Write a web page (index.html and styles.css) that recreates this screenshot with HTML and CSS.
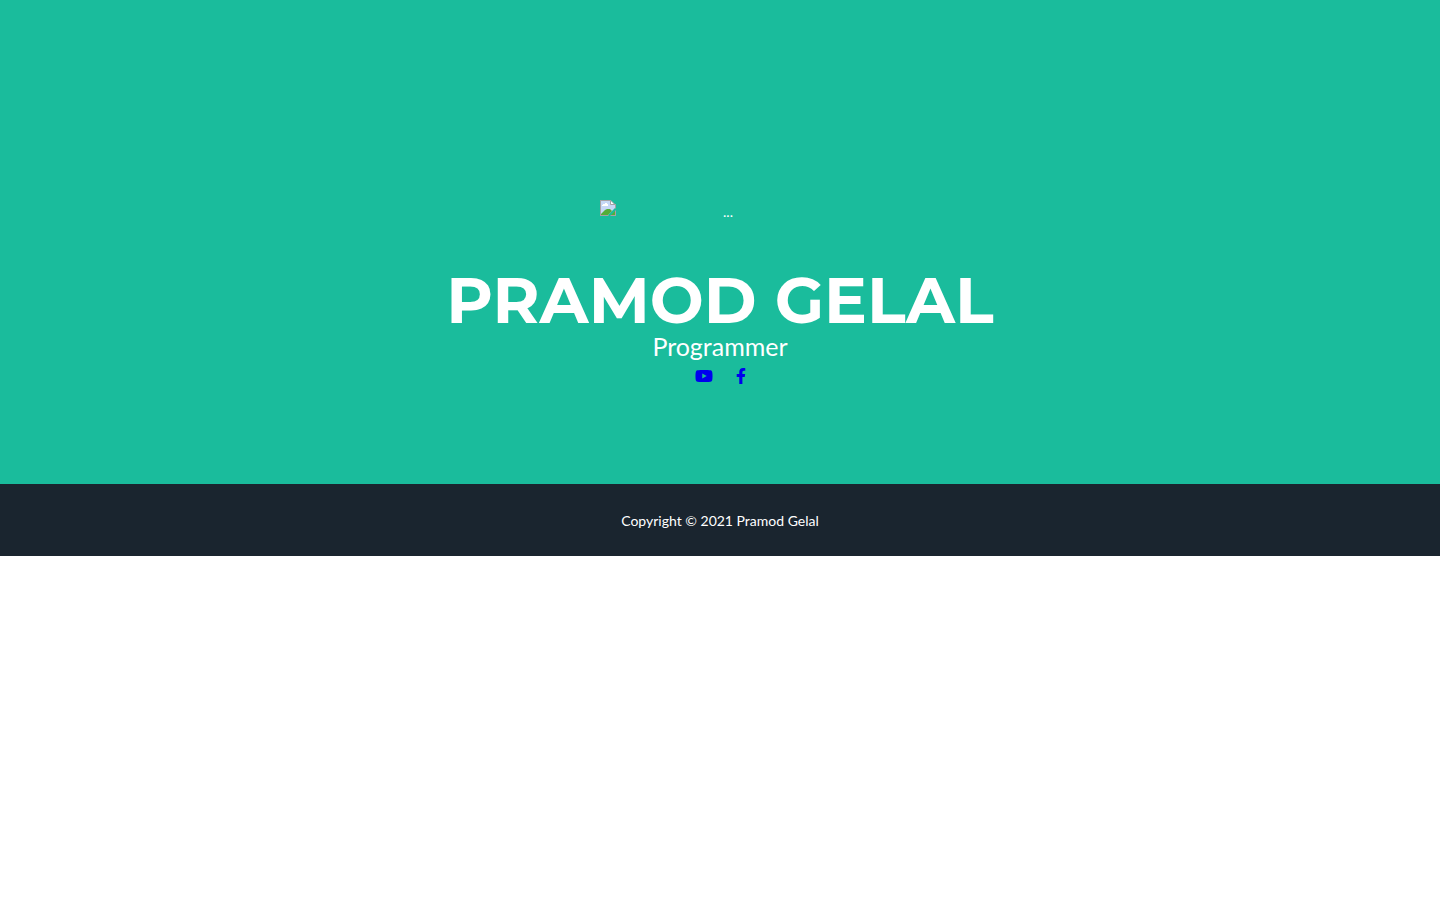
FILE: index.html
```html
<!DOCTYPE html>
<html lang="en">
<head>
<meta charset="utf-8">
<title>Pramod Gelal</title>
<link rel="stylesheet" href="styles.css">
</head>
<body>
<header class="masthead">
  <div class="avatar" role="img" aria-label="...">
    <svg class="broken-icon" width="16" height="16" viewBox="0 0 16 16" aria-hidden="true">
      <path fill="#c6d8f6" d="M1 1h10l4 4v3l-7 7H1z"/>
      <path fill="#fff" d="M2 6V5h1V4h2V3h2v1h1v2z"/>
      <path fill="#55ad37" d="M1 15v-1l4-4 2-1h3l2 2-4 4z"/>
      <path fill="#55ad37" d="M11 15l4-4v4z"/>
      <path fill="#a7a2a5" d="M0 0h11v1H1v14h8l-1 1H0zM15 5h1v3l-1 1zM15 11l1-1v6h-6l1-1h4z"/>
      <path fill="#fff" d="M11 1l4 4h-4z"/>
      <path fill="none" stroke="#a7a2a5" d="M10.500 0v4.500H16M11 .5l4.500 4.500"/>
    </svg>
    <span class="alt">...</span>
  </div>
  <h1 class="name">PRAMOD GELAL</h1>
  <p class="role">Programmer</p>
  <nav class="social">
    <a href="#youtube" aria-label="YouTube"><svg width="18" height="16" viewBox="0 0 576 512"><path fill="currentColor" d="M549.655 124.083c-6.281-23.650-24.787-42.276-48.284-48.597C458.781 64 288 64 288 64S117.220 64 74.629 75.486c-23.497 6.322-42.003 24.947-48.284 48.597-11.412 42.867-11.412 132.305-11.412 132.305s0 89.438 11.412 132.305c6.281 23.650 24.787 41.500 48.284 47.821C117.220 448 288 448 288 448s170.780 0 213.371-11.486c23.497-6.321 42.003-24.171 48.284-47.821 11.412-42.867 11.412-132.305 11.412-132.305s0-89.438-11.412-132.305zm-317.510 213.508V175.185l142.739 81.205-142.739 81.201z"/></svg></a>
    <a href="#facebook" aria-label="Facebook"><svg width="10" height="16" viewBox="0 0 320 512"><path fill="currentColor" d="M279.140 288l14.220-92.660h-88.910v-60.130c0-25.350 12.420-50.060 52.240-50.060h40.420V6.260S260.430 0 225.360 0c-73.220 0-121.080 44.380-121.080 124.720v70.620H22.890V288h81.390v224h100.170V288z"/></svg></a>
  </nav>
</header>
<footer class="copyright">Copyright © 2021 Pramod Gelal</footer>
</body>
</html>
```
FILE: styles.css
```css
* { box-sizing: border-box; }
body { margin: 0; font-family: Lato, sans-serif; font-size: 14px; line-height: 24px; color: #fff; background: #fff; }
.masthead { display: flex; flex-direction: column; align-items: center; padding: 200px 24px 96px; background: #1abc9c; }
.avatar { display: flex; width: 240px; height: 24px; margin-bottom: 44px; }
.broken-icon { flex: none; }
.alt { flex: 1; text-align: center; }
.name { margin: 0; font-family: Montserrat, "Open Sans", sans-serif; font-size: 64px; line-height: 64px; font-weight: 700; }
.role { margin: 0 0 4px; font-size: 25px; line-height: 28px; }
.social { display: flex; align-items: center; gap: 23px; height: 24px; }
.social a { display: flex; color: #00e; }
.copyright { padding: 25px 24px 23px; background: #1a252f; text-align: center; }
```
